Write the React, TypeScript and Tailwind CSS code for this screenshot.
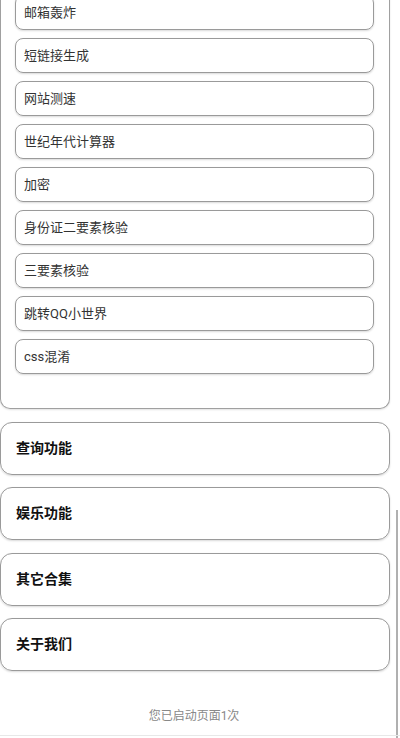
import React from "react";

const items = [
  "邮箱轰炸",
  "短链接生成",
  "网站测速",
  "世纪年代计算器",
  "加密",
  "身份证二要素核验",
  "三要素核验",
  "跳转QQ小世界",
  "css混淆",
];

const sections = ["查询功能", "娱乐功能", "其它合集", "关于我们"];

export default function App() {
  return (
    <div
      className="relative w-[400px] h-[738px] overflow-hidden bg-white"
      style={{ fontFamily: 'Roboto, "Noto Sans CJK SC", sans-serif' }}
    >
      <div className="w-[390px] border border-[#a0a0a0] rounded-b-[10px] border-t-0 pt-0 pb-[34px] px-[14px] shadow-[0_1px_2px_rgba(0,0,0,0.12)] flex flex-col gap-[8px] mt-[-5px]">
        {items.map((t) => (
          <div
            key={t}
            className="h-[35px] w-[359px] flex items-center pl-[8px] border border-[#9a9a9a] rounded-[8px] text-[13px] text-[#333] shadow-[0_1px_2px_rgba(0,0,0,0.15)]"
          >
            {t}
          </div>
        ))}
      </div>
      <div className="flex flex-col gap-[12.3px] mt-[13px]">
        {sections.map((s) => (
          <div
            key={s}
            className="h-[53px] w-[390px] flex items-center pl-[15px] border border-[#9a9a9a] rounded-[12px] text-[14px] font-bold text-[#111] shadow-[0_1px_2px_rgba(0,0,0,0.15)]"
          >
            {s}
          </div>
        ))}
      </div>
      <div className="mt-[36px] text-center text-[12px] text-[#888] pr-[12px]">
        您已启动页面1次
      </div>
      <div className="absolute right-[2px] top-[510px] w-[2px] h-[228px] bg-[#b0b0b0]" />
      <div className="absolute left-0 bottom-[2px] w-full h-[1px] bg-[#e8e8e8]" />
    </div>
  );
}
